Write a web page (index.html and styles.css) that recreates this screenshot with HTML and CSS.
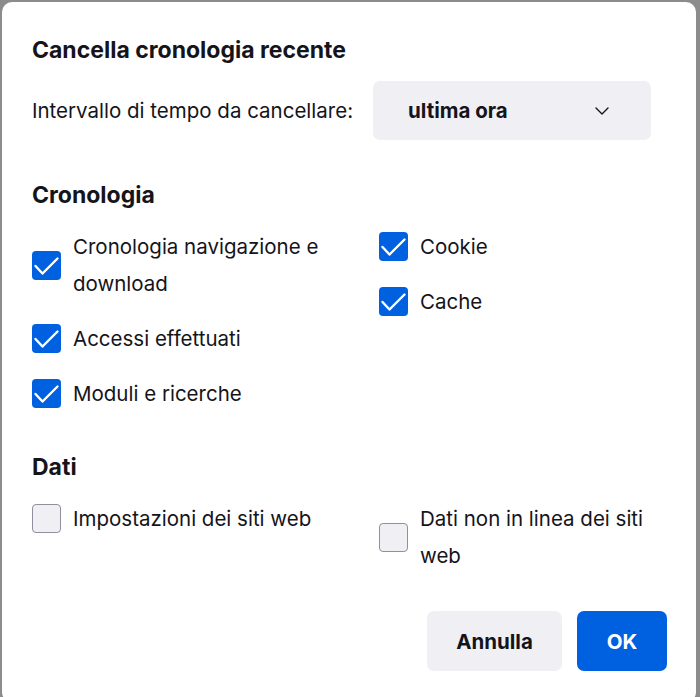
FILE: index.html
```html
<!DOCTYPE html>
<html lang="it">
<head>
<meta charset="utf-8">
<title>Cancella cronologia recente</title>
<link rel="stylesheet" href="styles.css">
</head>
<body>
<div class="dialog">
  <h1 class="title">Cancella cronologia recente</h1>
  <div class="range-row">
    <span class="range-label">Intervallo di tempo da cancellare:</span>
    <div class="select">
      <span class="select-value">ultima ora</span>
      <svg class="chevron" width="16" height="16" viewBox="0 0 16 16"><path d="M2 5 L8 11 L14 5" fill="none" stroke="#15141a" stroke-width="1.4" stroke-linecap="round" stroke-linejoin="round"/></svg>
    </div>
  </div>

  <section class="group">
    <h2 class="group-title">Cronologia</h2>
    <div class="grid">
      <div class="col">
        <div class="item">
          <span class="box checked"><svg viewBox="0 0 29 29"><path d="M3.5 15 L10.5 22.5 L25.5 7.5" fill="none" stroke="#fff" stroke-width="2.4" stroke-linecap="round" stroke-linejoin="round"/></svg></span>
          <span class="label">Cronologia navigazione e download</span>
        </div>
        <div class="item">
          <span class="box checked"><svg viewBox="0 0 29 29"><path d="M3.5 15 L10.5 22.5 L25.5 7.5" fill="none" stroke="#fff" stroke-width="2.4" stroke-linecap="round" stroke-linejoin="round"/></svg></span>
          <span class="label">Accessi effettuati</span>
        </div>
        <div class="item">
          <span class="box checked"><svg viewBox="0 0 29 29"><path d="M3.5 15 L10.5 22.5 L25.5 7.5" fill="none" stroke="#fff" stroke-width="2.4" stroke-linecap="round" stroke-linejoin="round"/></svg></span>
          <span class="label">Moduli e ricerche</span>
        </div>
      </div>
      <div class="col">
        <div class="item">
          <span class="box checked"><svg viewBox="0 0 29 29"><path d="M3.5 15 L10.5 22.5 L25.5 7.5" fill="none" stroke="#fff" stroke-width="2.4" stroke-linecap="round" stroke-linejoin="round"/></svg></span>
          <span class="label">Cookie</span>
        </div>
        <div class="item">
          <span class="box checked"><svg viewBox="0 0 29 29"><path d="M3.5 15 L10.5 22.5 L25.5 7.5" fill="none" stroke="#fff" stroke-width="2.4" stroke-linecap="round" stroke-linejoin="round"/></svg></span>
          <span class="label">Cache</span>
        </div>
      </div>
    </div>
  </section>

  <section class="group group-data">
    <h2 class="group-title">Dati</h2>
    <div class="grid">
      <div class="col">
        <div class="item">
          <span class="box"></span>
          <span class="label">Impostazioni dei siti web</span>
        </div>
      </div>
      <div class="col">
        <div class="item">
          <span class="box"></span>
          <span class="label">Dati non in linea dei siti web</span>
        </div>
      </div>
    </div>
  </section>

  <div class="actions">
    <button class="btn btn-secondary">Annulla</button>
    <button class="btn btn-primary">OK</button>
  </div>
</div>
</body>
</html>
```
FILE: styles.css
```css
html, body {
  margin: 0;
  padding: 0;
  height: 100%;
}
body {
  background: #8c8c8c;
  font-family: Inter, "Noto Sans", "Liberation Sans", sans-serif;
  color: #15141a;
  overflow: hidden;
}
.dialog {
  box-sizing: border-box;
  margin: 2px 4px 0 2px;
  height: 700px;
  background: #ffffff;
  border-radius: 10px;
  padding: 34px 29px 0 30px;
  display: flex;
  flex-direction: column;
}
.title {
  margin: 0;
  font-size: 23px;
  font-weight: 700;
  line-height: 28px;
}
.range-row {
  display: flex;
  align-items: center;
  gap: 20px;
  margin-top: 17px;
}
.range-label {
  font-size: 20.5px;
}
.select {
  box-sizing: border-box;
  width: 278px;
  height: 59px;
  background: #f0f0f4;
  border-radius: 7px;
  display: flex;
  align-items: center;
  justify-content: space-between;
  padding: 0 41px 0 35px;
}
.select-value {
  font-size: 20.5px;
  font-weight: 700;
}
.chevron {
  display: block;
}
.group {
  margin-top: 41px;
}
.group-data {
  margin-top: 41px;
}
.group-title {
  margin: 0 0 19px;
  font-size: 23px;
  font-weight: 700;
  line-height: 28px;
}
.grid {
  display: grid;
  grid-template-columns: 347px 1fr;
}
.col {
  display: flex;
  flex-direction: column;
  gap: 18px;
}
.item {
  display: flex;
  align-items: center;
  gap: 12px;
  padding-right: 10px;
}
.box {
  flex: none;
  box-sizing: border-box;
  width: 29px;
  height: 29px;
  border-radius: 4px;
  background: #f0f0f4;
  border: 1px solid #8f8f9d;
}
.box.checked {
  background: #0061e0;
  border: none;
}
.box svg {
  display: block;
  width: 29px;
  height: 29px;
}
.label {
  font-size: 20.5px;
  line-height: 37px;
}
.actions {
  margin-top: 37px;
  display: flex;
  justify-content: flex-end;
  gap: 15px;
}
.btn {
  font-family: inherit;
  font-size: 20.5px;
  font-weight: 700;
  height: 60px;
  border: none;
  border-radius: 7px;
  cursor: pointer;
}
.btn-secondary {
  width: 135px;
  background: #f0f0f4;
  color: #15141a;
}
.btn-primary {
  width: 90px;
  background: #0061e0;
  color: #ffffff;
}
```
